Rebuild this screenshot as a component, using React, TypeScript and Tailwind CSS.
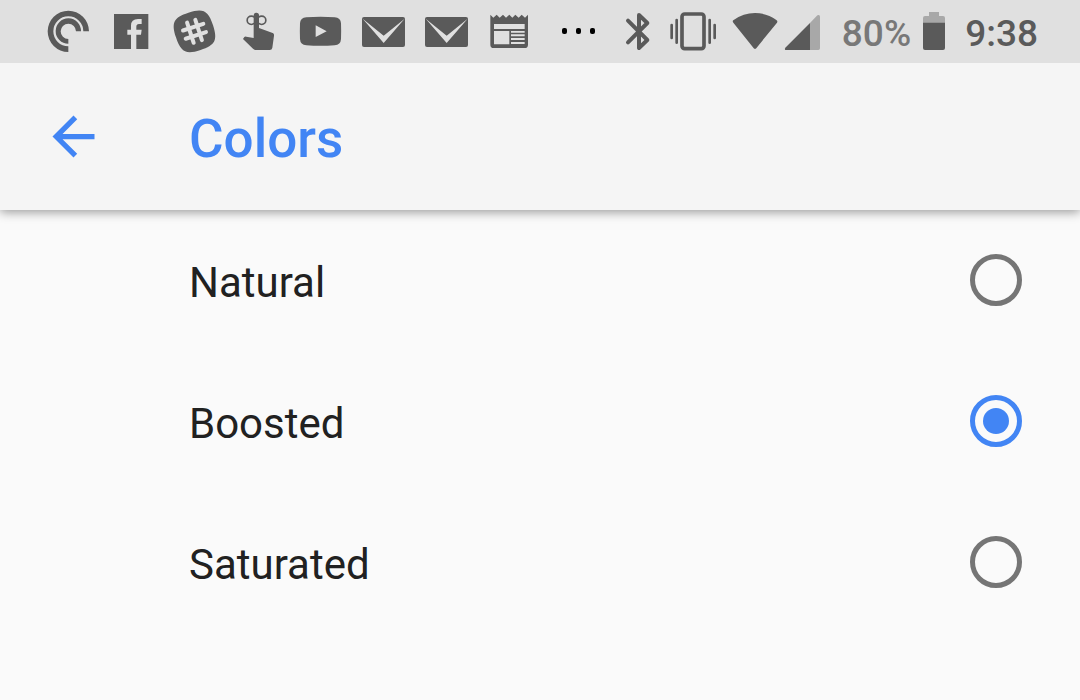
import { useState } from "react";
import type { ReactNode } from "react";

function Glyph({ viewBox, className = "w-[63px]", children }: { viewBox: string; className?: string; children: ReactNode }) {
  return (
    <svg viewBox={viewBox} className={`h-[63px] shrink-0 ${className}`} fill="currentColor" aria-hidden="true">
      {children}
    </svg>
  );
}

function PodcastIcon() {
  return (
    <Glyph viewBox="21 0 189 189">
      <path d="M115 156A62 62 0 1 1 177 94H160A45 45 0 1 0 115 139Z" />
      <path d="M115 131A38 38 0 1 1 153 94H138A23 23 0 1 0 115 117Z" />
    </Glyph>
  );
}

function FacebookIcon() {
  return (
    <Glyph viewBox="210 0 189 189">
      <path d="M252 42H355V147H319V104H333L335 89H319V80Q319 72 327 72H335V57H324Q303 57 303 77V89H292V104H303V147H252Z" />
    </Glyph>
  );
}

function SlackIcon() {
  return (
    <Glyph viewBox="399 0 189 189">
      <g transform="rotate(-18 493.500 94)">
        <path d="M493.500 35C540 35 552 47 552 94S540 153 493.500 153S435 141 435 94S447 35 493.500 35Z" />
        <path
          d="M480.500 62V126M506.500 62V126M461.500 81H525.500M461.500 107H525.500"
          fill="none"
          stroke="#e0e0e0"
          strokeWidth="12"
          strokeLinecap="round"
        />
      </g>
    </Glyph>
  );
}

function ReminderIcon() {
  return (
    <Glyph viewBox="18 0 189 189">
      <path d="M101 46Q101 38 109 38Q117 38 117 46V84L158 99Q163 101 162 107L157 143Q156 150 149 150H108Q103 150 99 146L69 117L73 111Q75 109 79 110L101 114Z" />
      <g fill="none" stroke="currentColor" strokeWidth="5">
        <circle cx="94" cy="61" r="12.500" />
        <circle cx="125" cy="61" r="12.500" />
      </g>
    </Glyph>
  );
}

function YouTubeIcon() {
  return (
    <Glyph viewBox="207 0 189 189">
      <path
        fillRule="evenodd"
        d="M259 52Q301 49 344 52Q362 53 363 70Q364 94 363 117Q362 135 344 136Q301 139 259 136Q241 135 240 117Q239 94 240 70Q241 53 259 52ZM287 76V111L320 94Z"
      />
    </Glyph>
  );
}

function MailIcon() {
  return (
    <Glyph viewBox="396 0 189 189">
      <rect x="426" y="51" width="129" height="90" rx="6" />
      <path d="M428 56L491 107L554 56L491 129Z" fill="#e0e0e0" />
    </Glyph>
  );
}

function NewsIcon() {
  return (
    <Glyph viewBox="204 0 189 189">
      <path
        fillRule="evenodd"
        d="M241 44L250 53L260 44L269 53L279 44L288 53L298 44L307 53L316 44L326 53L335 44L345 53L354 44V134Q354 144 344 144H251Q241 144 241 134ZM252 72V87H344V72ZM252 93V133H298V93ZM303 93V98H344V93ZM303 103V109H344V103ZM303 114V120H344V114ZM303 126V132H344V126Z"
      />
    </Glyph>
  );
}

function MoreIcon() {
  return (
    <Glyph viewBox="393 0 189 189">
      <g fill="#000">
        <rect x="456" y="84" width="15" height="18" rx="6" />
        <rect x="498" y="84" width="15" height="18" rx="6" />
        <rect x="540" y="84" width="15" height="18" rx="6" />
      </g>
    </Glyph>
  );
}

function BluetoothIcon() {
  return (
    <Glyph viewBox="12 0 180 189" className="w-[60px]">
      <path
        d="M84 62L142 120L117 144V45L142 69L84 127"
        fill="none"
        stroke="currentColor"
        strokeWidth="12"
        strokeLinejoin="round"
        strokeLinecap="round"
      />
    </Glyph>
  );
}

function VibrateIcon() {
  return (
    <Glyph viewBox="192 0 174 189" className="w-[58px]">
      <rect x="246" y="42" width="66" height="104" rx="8" fill="none" stroke="currentColor" strokeWidth="11" />
      <path
        d="M215 75V114M230 60V128M329 60V128M344 75V114"
        fill="none"
        stroke="currentColor"
        strokeWidth="8"
        strokeLinecap="round"
      />
    </Glyph>
  );
}

function WifiIcon() {
  return (
    <Glyph viewBox="366 0 180 189" className="w-[60px]">
      <path d="M400 68Q396 63 401 60Q430 39 465 39Q500 39 529 60Q534 63 531 68L470 143Q465 150 460 143Z" />
    </Glyph>
  );
}

function SignalIcon() {
  return (
    <Glyph viewBox="546 0 120 189" className="w-[40px]">
      <path d="M630 69L650 48Q653 44 657 45Q660 46 660 51V145Q660 150 655 150H630Z" fill="#a8a8a8" />
      <path d="M630 69V150H559Q552 150 556 143Z" />
    </Glyph>
  );
}

function BatteryIcon() {
  return (
    <Glyph viewBox="306 0 72 189" className="w-[24px]">
      <path d="M327 36H357V48H369Q375 48 375 54V69H309V54Q309 48 315 48H327Z" fill="#a8a8a8" />
      <path d="M309 68H375V144Q375 150 369 150H315Q309 150 309 144Z" />
    </Glyph>
  );
}

const options = ["Natural", "Boosted", "Saturated"];

export default function App() {
  const [selected, setSelected] = useState("Boosted");

  return (
    <div className="min-h-screen bg-[#fafafa] font-[Roboto,sans-serif] text-[#212121]">
      <div className="relative z-10 flex h-[63px] items-center overflow-hidden bg-[#e0e0e0] pr-[42px] pl-[37px] text-[#5a5a5a]">
        <PodcastIcon />
        <FacebookIcon />
        <SlackIcon />
        <ReminderIcon />
        <YouTubeIcon />
        <MailIcon />
        <MailIcon />
        <NewsIcon />
        <MoreIcon />
        <BluetoothIcon />
        <VibrateIcon />
        <WifiIcon />
        <SignalIcon />
        <div className="ml-auto flex items-center text-[37px] leading-[42px] font-medium">
          <span className="mt-1 mr-[11px] text-[#787878]">80%</span>
          <BatteryIcon />
          <time className="mt-1 ml-[19px]">9:38</time>
        </div>
      </div>

      <header className="relative flex h-[147px] items-center bg-[#f5f5f5] pl-[42px] text-[#4285f4] shadow-[0_2px_10px_rgba(0,0,0,0.4)]">
        <button type="button" aria-label="Back" className="mr-[84px] size-[63px] shrink-0 cursor-pointer">
          <svg viewBox="0 0 24 24" className="size-full" fill="currentColor" aria-hidden="true">
            <path d="M20 11H7.830l5.590-5.590L12 4l-8 8 8 8 1.410-1.410L7.830 13H20v-2z" />
          </svg>
        </button>
        <h1 className="pt-1 text-[53px] leading-[62px] font-medium">Colors</h1>
      </header>

      <main role="radiogroup" aria-label="Colors">
        {options.map((name) => (
          <label key={name} className="flex h-[141px] cursor-pointer items-center justify-between pr-[58px] pb-0.5 pl-[189px]">
            <span className="pt-1.5 text-[42px] leading-[50px]">{name}</span>
            <input
              type="radio"
              name="colors"
              value={name}
              checked={selected === name}
              onChange={() => setSelected(name)}
              className="flex size-[52px] shrink-0 appearance-none items-center justify-center rounded-full border-5 border-[#757575] before:size-[26px] before:rounded-full checked:border-[#4285f4] checked:before:bg-[#4285f4] checked:before:content-['']"
            />
          </label>
        ))}
      </main>
    </div>
  );
}
